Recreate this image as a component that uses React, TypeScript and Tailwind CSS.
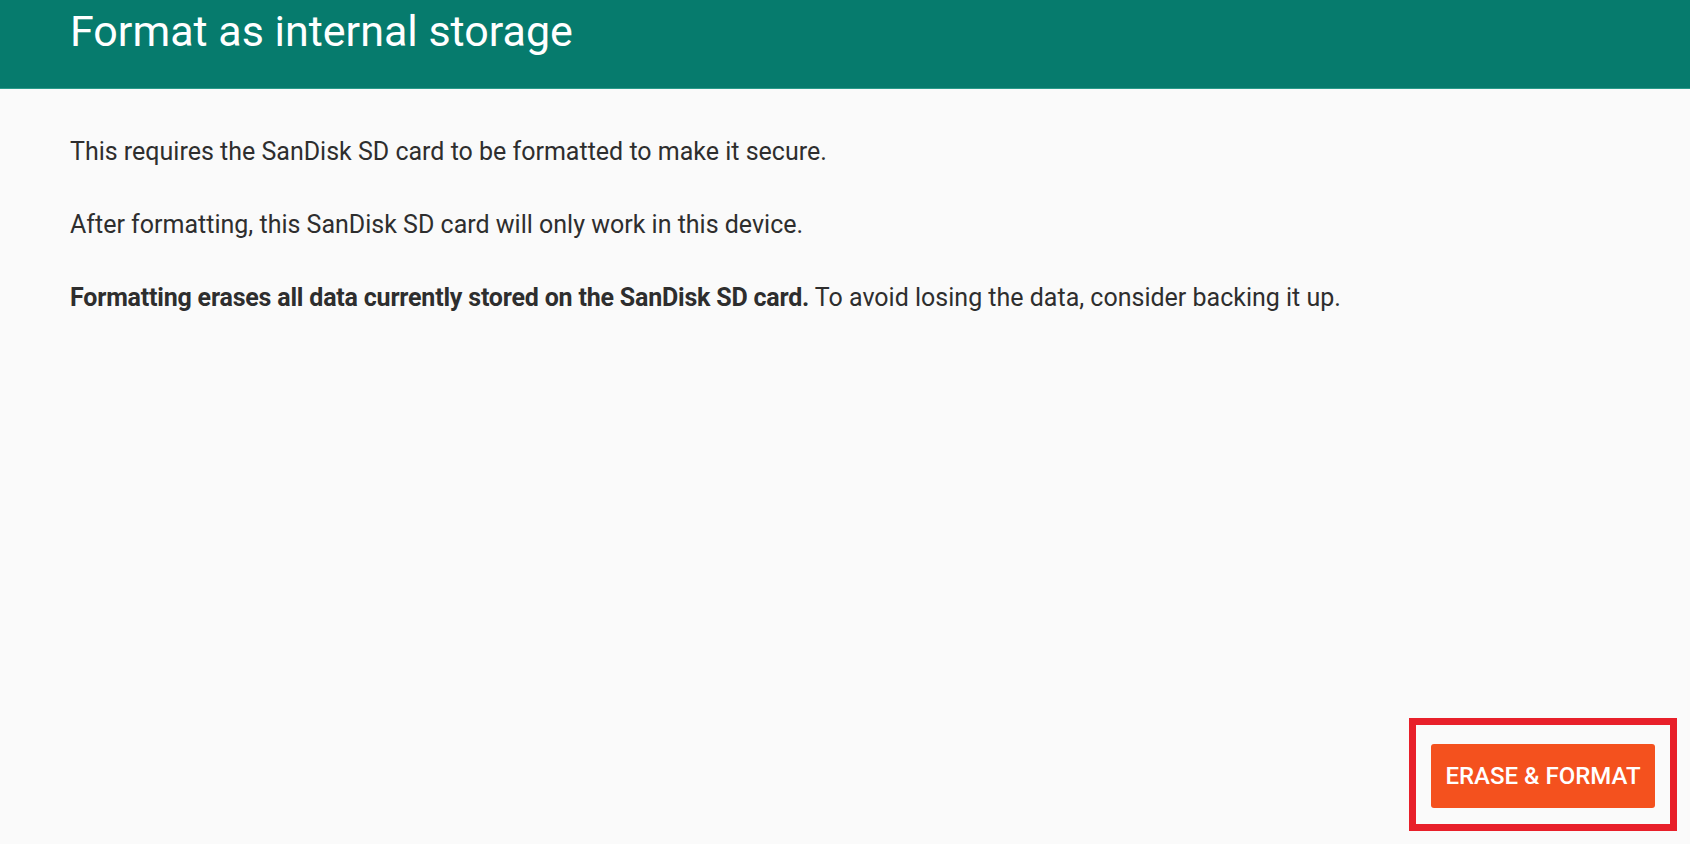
export default function App() {
  return (
    <div
      className="h-[844px] w-full bg-[#fafafa] flex flex-col overflow-hidden"
      style={{ fontFamily: 'Roboto, "Liberation Sans", sans-serif' }}
    >
      {/* Header */}
      <header className="h-[89px] bg-[#067b6d] border-b border-[#2a9a8a] flex items-start pl-[70px]">
        <h1 className="text-white text-[43px] leading-none mt-[10px]">Format as internal storage</h1>
      </header>

      {/* Body */}
      <div className="flex-1 flex flex-col pl-[70px] pt-[48px] text-[#2e2e2e] text-[25px] gap-[43px]">
        <p className="leading-[30px]">This requires the SanDisk SD card to be formatted to make it secure.</p>
        <p className="leading-[30px]">After formatting, this SanDisk SD card will only work in this device.</p>
        <p className="leading-[30px]">
          <span className="font-bold tracking-[-0.2px]">Formatting erases all data currently stored on the SanDisk SD card.</span> To avoid
          losing the data, consider backing it up.
        </p>
      </div>

      {/* Footer */}
      <div className="flex justify-end pr-[13px] pb-[13px]">
        <div className="border-[7px] border-[#e8202a] px-[15px] pt-[19px] pb-[16px]">
          <button className="h-[64px] w-[224px] rounded-[3px] bg-[#f4511e] text-white text-[24px] font-medium">
            ERASE &amp; FORMAT
          </button>
        </div>
      </div>
    </div>
  );
}
